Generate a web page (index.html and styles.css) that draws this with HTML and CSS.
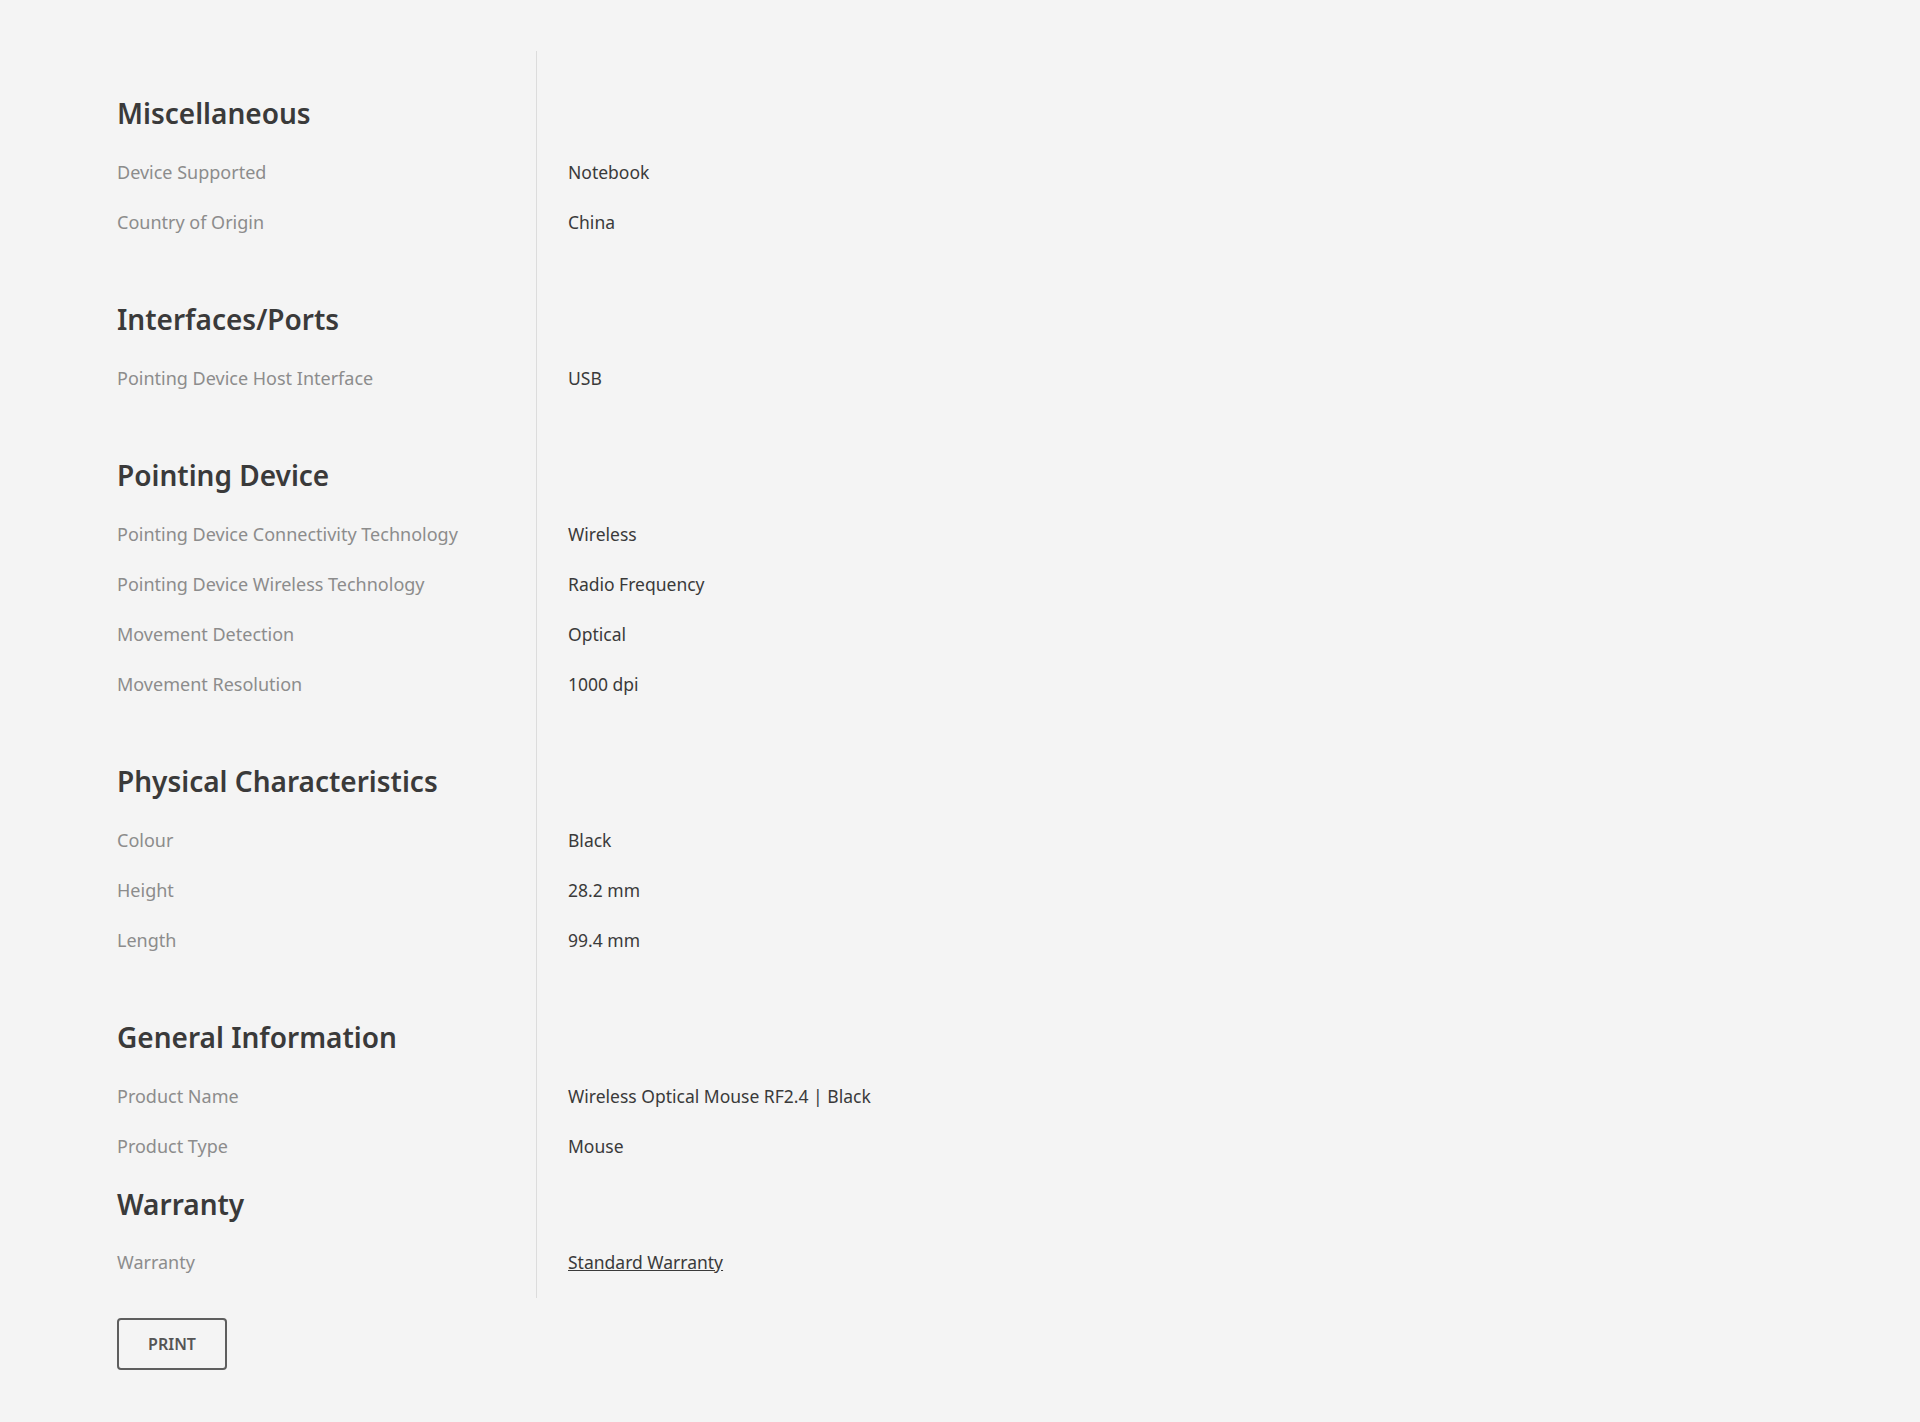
FILE: index.html
```html
<!DOCTYPE html>
<html lang="en">
<head>
    <meta charset="UTF-8">
    <meta name="viewport" content="width=device-width, initial-scale=1.0">
    <title>Specifications</title>
    <link rel="stylesheet" href="styles.css">
</head>
<body>
    <main class="specs-page">
        <div class="specs">
            <section class="spec-group">
                <div class="spec-row head"><h3>Miscellaneous</h3><div></div></div>
                <div class="spec-row"><div class="label">Device Supported</div><div class="value">Notebook</div></div>
                <div class="spec-row"><div class="label">Country of Origin</div><div class="value">China</div></div>
            </section>
            <section class="spec-group">
                <div class="spec-row head"><h3>Interfaces/Ports</h3><div></div></div>
                <div class="spec-row"><div class="label">Pointing Device Host Interface</div><div class="value">USB</div></div>
            </section>
            <section class="spec-group">
                <div class="spec-row head"><h3>Pointing Device</h3><div></div></div>
                <div class="spec-row"><div class="label">Pointing Device Connectivity Technology</div><div class="value">Wireless</div></div>
                <div class="spec-row"><div class="label">Pointing Device Wireless Technology</div><div class="value">Radio Frequency</div></div>
                <div class="spec-row"><div class="label">Movement Detection</div><div class="value">Optical</div></div>
                <div class="spec-row"><div class="label">Movement Resolution</div><div class="value">1000 dpi</div></div>
            </section>
            <section class="spec-group">
                <div class="spec-row head"><h3>Physical Characteristics</h3><div></div></div>
                <div class="spec-row"><div class="label">Colour</div><div class="value">Black</div></div>
                <div class="spec-row"><div class="label">Height</div><div class="value">28.2 mm</div></div>
                <div class="spec-row"><div class="label">Length</div><div class="value">99.4 mm</div></div>
            </section>
            <section class="spec-group">
                <div class="spec-row head"><h3>General Information</h3><div></div></div>
                <div class="spec-row"><div class="label">Product Name</div><div class="value">Wireless Optical Mouse RF2.4 | Black</div></div>
                <div class="spec-row"><div class="label">Product Type</div><div class="value">Mouse</div></div>
            </section>
            <section class="spec-group warranty">
                <div class="spec-row head"><h3>Warranty</h3><div></div></div>
                <div class="spec-row"><div class="label">Warranty</div><div class="value"><a href="#">Standard Warranty</a></div></div>
            </section>
        </div>
        <button class="print-btn">PRINT</button>
    </main>
</body>
</html>
```

FILE: styles.css
```css
body {
    margin: 0;
    padding: 0;
    background-color: #f4f4f4;
    color: #333;
    font-family: "Noto Sans", sans-serif;
}
.specs-page {
    padding: 51px 0 50px 117px;
}
.specs {
    display: flex;
    flex-direction: column;
}
.spec-row {
    display: grid;
    grid-template-columns: 420px 1fr;
}
.spec-row > :first-child {
    border-right: 1px solid #dcdcdc;
}
.spec-group:first-child .head > :first-child {
    padding-top: 44px;
}
.spec-group .head > :first-child {
    padding-bottom: 16px;
}
.spec-group + .spec-group .head > :first-child {
    padding-top: 54px;
}
.spec-group.warranty .head > :first-child {
    padding-top: 15px;
    padding-bottom: 15px;
}
.spec-group.warranty .spec-row:last-child > :first-child {
    padding-bottom: 11px;
}
h3 {
    margin: 0;
    font-size: 28px;
    line-height: 36px;
    font-weight: 600;
    color: #3a3a3a;
}
.label,
.value {
    line-height: 50px;
}
.label {
    font-size: 18px;
    color: #8c8c8c;
}
.value {
    font-size: 17.5px;
    padding-left: 31px;
    color: #3a3a3a;
}
.value a {
    color: #3a3a3a;
}
.print-btn {
    margin-top: 20px;
    width: 110px;
    height: 52px;
    background: transparent;
    border: 2px solid #5e5e5e;
    border-radius: 4px;
    font-family: inherit;
    font-size: 16px;
    font-weight: 600;
    color: #555;
    cursor: pointer;
}
```
